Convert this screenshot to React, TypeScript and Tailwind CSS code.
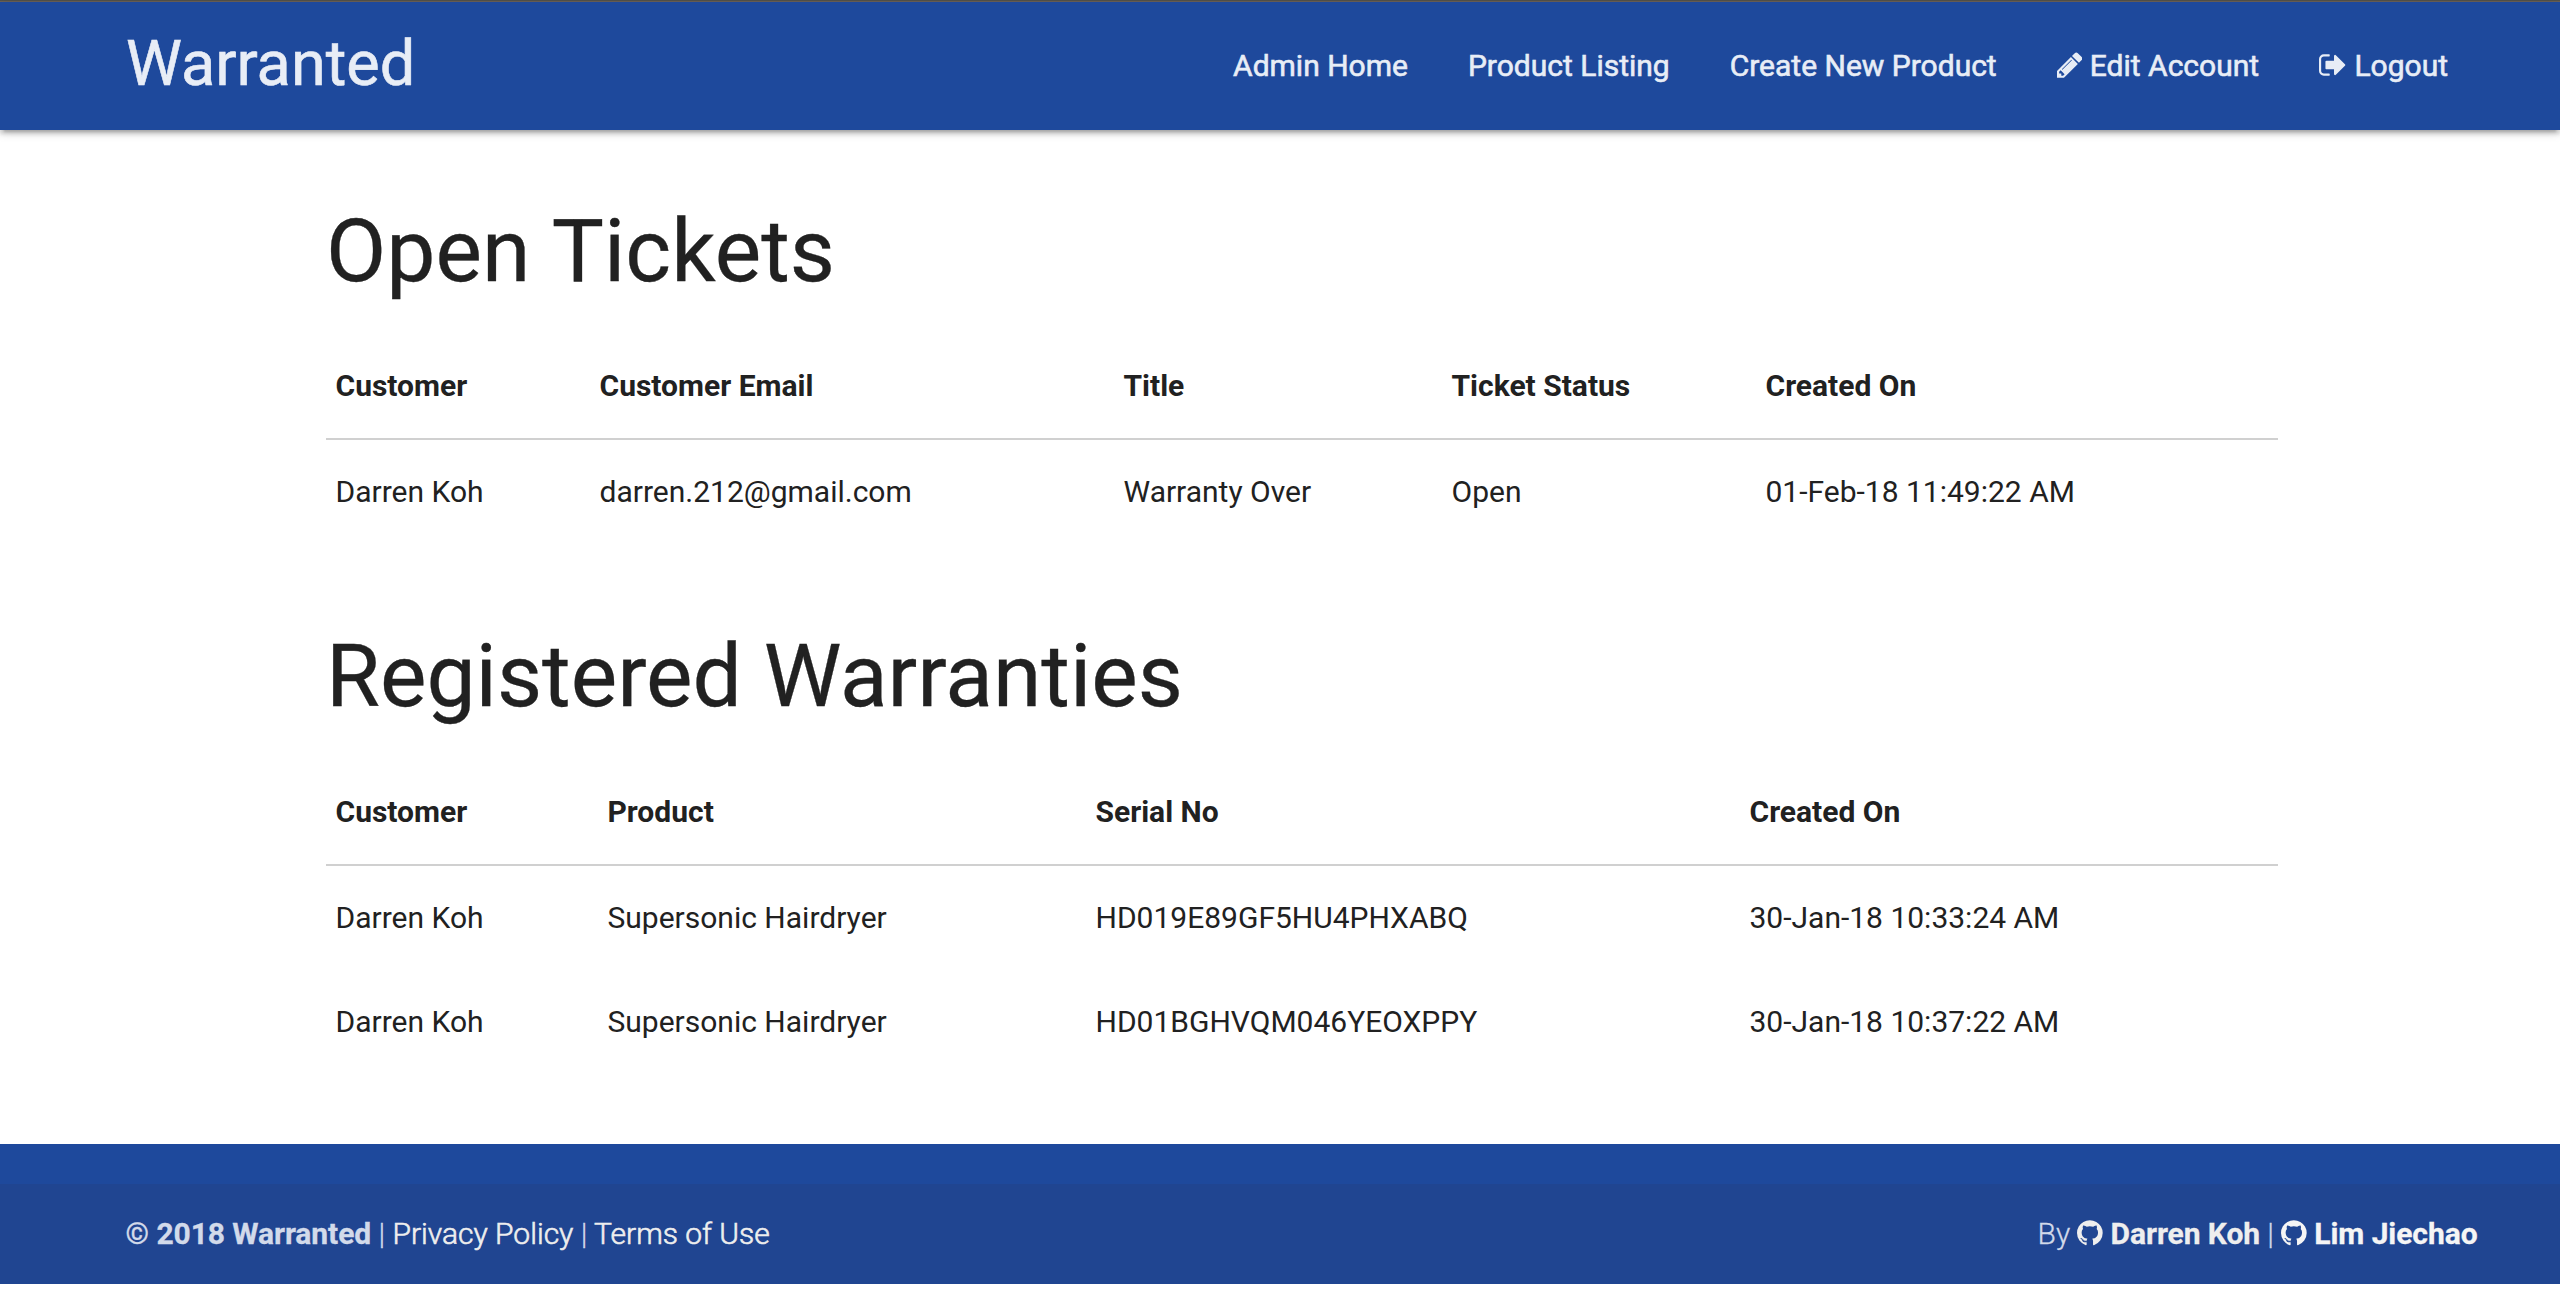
import type { ReactNode } from "react";

function Icon({ width, viewBox, d }: { width: number; viewBox: string; d: string }) {
  return (
    <svg width={width} height={30} viewBox={viewBox} fill="currentColor" className="inline-block align-[-4.3px]">
      <path d={d} />
    </svg>
  );
}

const PencilIcon = () => (
  <Icon
    width={25.7}
    viewBox="128 0 1536 1792"
    d="M491 1536l91-91-235-235-91 91v107h128v128h107zm523-928q0-22-22-22-10 0-17 7l-542 542q-7 7-7 17 0 22 22 22 10 0 17-7l542-542q7-7 7-17zm-54-192l416 416-832 832h-416v-416zm683 96q0 53-37 90l-166 166-416-416 166-165q36-38 90-38 53 0 91 38l235 234q37 39 37 91z"
  />
);

const SignOutIcon = () => (
  <Icon
    width={27.9}
    viewBox="64 0 1664 1792"
    d="M704 1440q0 4 1 20t.5 26.5-3 23.5-10 19.5-20.5 6.5h-320q-119 0-203.5-84.5t-84.5-203.5v-704q0-119 84.5-203.5t203.5-84.5h320q13 0 22.5 9.5t9.5 22.5q0 4 1 20t.5 26.5-3 23.5-10 19.5-20.5 6.5h-320q-66 0-113 47t-47 113v704q0 66 47 113t113 47h312l11.5 1 11.5 3 8 5.5 7 9 2 13.5zm928-544q0 26-19 45l-544 544q-19 19-45 19t-45-19-19-45v-288h-448q-26 0-45-19t-19-45v-384q0-26 19-45t45-19h448v-288q0-26 19-45t45-19 45 19l544 544q19 19 19 45z"
  />
);

const GithubIcon = () => (
  <Icon
    width={25.7}
    viewBox="128 0 1536 1792"
    d="M896 128q209 0 385.5 103t279.5 279.5 103 385.5q0 251-146.5 451.5t-378.5 277.5q-27 5-40-7t-13-30q0-3 .5-76.5t.5-134.5q0-97-52-142 57-6 102.5-18t94-39 81-66.5 53-105 20.5-150.5q0-119-79-206 37-91-8-204-28-9-81 11t-92 44l-38 24q-93-26-192-26t-192 26q-16-11-42.5-27t-83.5-38.5-85-13.5q-45 113-8 204-79 87-79 206 0 85 20.5 150t52.5 105 80.5 67 94 39 102.5 18q-39 36-49 103-21 10-45 15t-57 5-65.5-21.5-55.5-62.5q-19-32-48.5-52t-49.5-24l-20-3q-21 0-29 4.5t-5 11.5 9 14 13 12l7 5q22 10 43.5 38t31.5 51l10 23q13 38 44 61.5t67 30 69.5 7 55.5-3.5l23-4q0 38 .5 88.5t.5 54.5q0 18-13 30t-40 7q-232-77-378.5-277.5t-146.5-451.5q0-209 103-385.5t279.5-279.5 385.5-103zm-477 1103q3-7-7-12-10-3-13 2-3 7 7 12 9 6 13-2zm31 34q7-5-2-16-10-9-16-3-7 5 2 16 10 10 16 3zm30 45q9-7 0-19-8-13-17-6-9 5 0 18t17 7zm42 42q8-8-4-19-12-12-20-3-9 8 4 19 12 12 20 3zm57 25q3-11-13-16-15-4-19 7t13 15q15 6 19-6zm63 5q0-13-17-11-16 0-16 11 0 13 17 11 16 0 16-11zm58-10q-2-11-18-9-16 3-14 15t18 8 14-14z"
  />
);

const NAV: { label: string; icon?: ReactNode }[] = [
  { label: "Admin Home" },
  { label: "Product Listing" },
  { label: "Create New Product" },
  { label: "Edit Account", icon: <PencilIcon /> },
  { label: "Logout", icon: <SignOutIcon /> },
];

function Table({ columns, head, rows }: { columns: string; head: string[]; rows: string[][] }) {
  return (
    <div className="w-[1952px]">
      <div className={`grid h-[106px] items-center border-b-2 border-[#d0d0d0] font-bold ${columns}`}>
        {head.map((h) => (
          <div key={h} className="pl-[9.5px]">{h}</div>
        ))}
      </div>
      {rows.map((row) => (
        <div key={row.join()} className={`grid h-[104px] items-center ${columns}`}>
          {row.map((cell) => (
            <div key={cell} className="pl-[9.5px]">{cell}</div>
          ))}
        </div>
      ))}
    </div>
  );
}

export default function App() {
  return (
    <div className="flex h-[1298px] w-[2560px] flex-col bg-white font-[Roboto,sans-serif] text-[30px] leading-[44px] whitespace-nowrap text-[#212121]">
      <div className="h-[2px] border-t border-[#54534b] bg-[#6b625a]" />
      <header className="relative flex h-[128px] items-center justify-between bg-[#1e499c] pr-[112px] pl-[126px] text-[#e8edf6] shadow-[0_4px_4px_0_rgba(0,0,0,0.14),0_6px_2px_-4px_rgba(0,0,0,0.12),0_2px_10px_0_rgba(0,0,0,0.2)]">
        <a className="self-start text-[63px] leading-[124px] [-webkit-text-stroke:0.6px]">Warranted</a>
        <nav className="flex gap-[60px] [-webkit-text-stroke:0.6px]">
          {NAV.map(({ label, icon }) => (
            <a key={label}>
              {icon}
              {icon && " "}
              {label}
            </a>
          ))}
        </nav>
      </header>
      <main className="flex flex-1 flex-col pl-[326px]">
        <h1 className="mt-[73px] mb-[35px] text-[87.6px] leading-[96px] [word-spacing:1.5px] [-webkit-text-stroke:0.3px]">Open Tickets</h1>
        <Table
          columns="grid-cols-[264px_524px_328px_314px_1fr]"
          head={["Customer", "Customer Email", "Title", "Ticket Status", "Created On"]}
          rows={[["Darren Koh", "darren.212@gmail.com", "Warranty Over", "Open", "01-Feb-18 11:49:22 AM"]]}
        />
        <h1 className="mt-[84px] mb-[36px] text-[87.6px] leading-[96px] [-webkit-text-stroke:0.3px]">Registered Warranties</h1>
        <Table
          columns="grid-cols-[272px_488px_654px_1fr]"
          head={["Customer", "Product", "Serial No", "Created On"]}
          rows={[
            ["Darren Koh", "Supersonic Hairdryer", "HD019E89GF5HU4PHXABQ", "30-Jan-18 10:33:24 AM"],
            ["Darren Koh", "Supersonic Hairdryer", "HD01BGHVQM046YEOXPPY", "30-Jan-18 10:37:22 AM"],
          ]}
        />
      </main>
      <footer className="mb-[14px] h-[140px] bg-[#1e499c] pt-[40px]">
        <div className="flex h-[100px] items-center justify-between bg-[#204591] pr-[82.5px] pl-[125.5px] font-light text-[#d2daea] [-webkit-text-stroke:0.3px]">
          <div>
            <b className="font-bold tracking-[-0.07px]">© 2018 Warranted</b> | <a className="text-[#eeeeee] [-webkit-text-stroke:0.6px]">Privacy Policy</a> |{" "}
            <a className="text-[#eeeeee] [-webkit-text-stroke:0.6px]">Terms of Use</a>
          </div>
          <div>
            By{" "}
            <a className="font-bold tracking-[-0.07px] text-[#eeeeee]">
              <GithubIcon /> Darren Koh
            </a>{" "}
            |{" "}
            <a className="font-bold tracking-[-0.07px] text-[#f5f5f5]">
              <GithubIcon /> Lim Jiechao
            </a>
          </div>
        </div>
      </footer>
    </div>
  );
}
